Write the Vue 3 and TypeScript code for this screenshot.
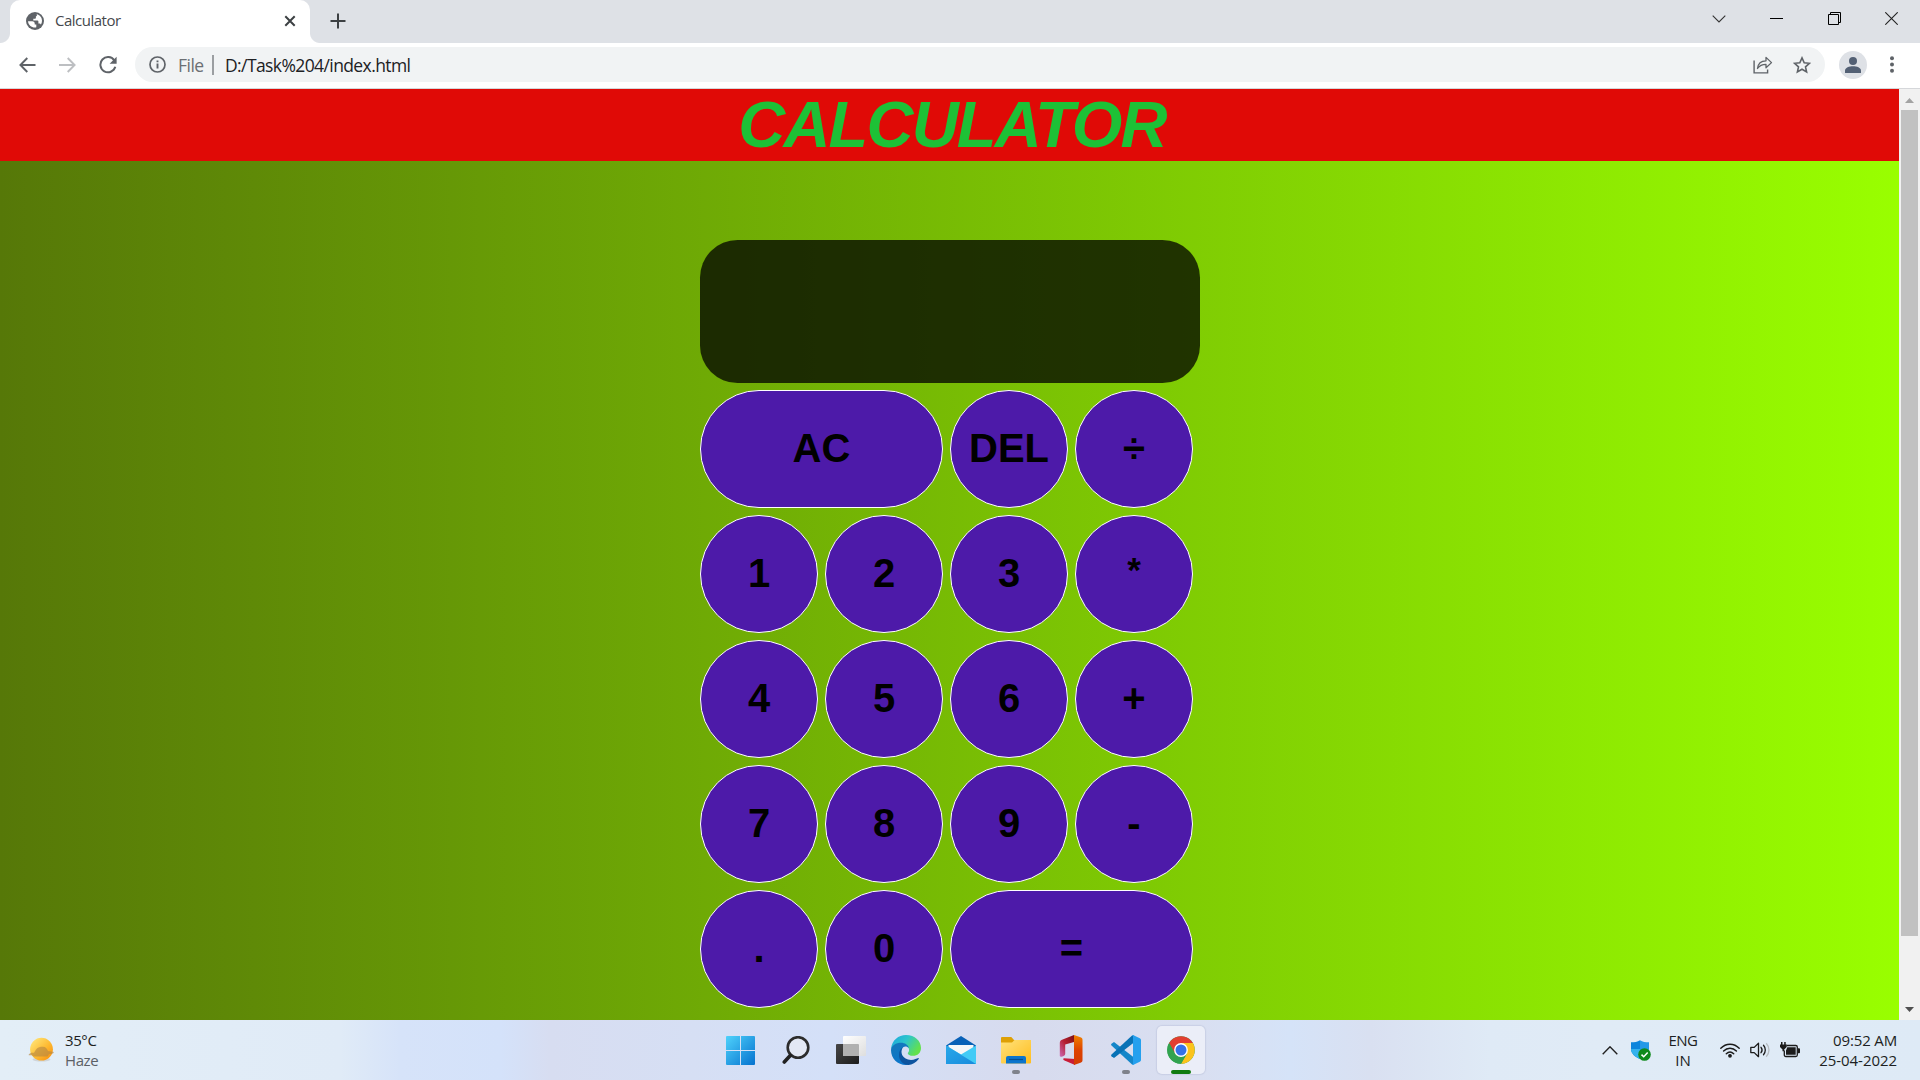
<script setup lang="ts">
interface Key {
  label: string
  wide?: boolean
}

const keys: Key[] = [
  { label: 'AC', wide: true },
  { label: 'DEL' },
  { label: '÷' },
  { label: '1' },
  { label: '2' },
  { label: '3' },
  { label: '*' },
  { label: '4' },
  { label: '5' },
  { label: '6' },
  { label: '+' },
  { label: '7' },
  { label: '8' },
  { label: '9' },
  { label: '-' },
  { label: '.' },
  { label: '0' },
  { label: '=', wide: true },
]
</script>

<template>
  <div class="screen">
    <header class="tabstrip">
      <div class="tab">
        <svg class="globe" width="18" height="18" viewBox="0 0 18 18">
          <circle cx="9" cy="9" r="9" fill="#5f6368" />
          <path d="M2 9.3h4.2c1.7 0 2.5.9 2.5 2.3v.9h1.6v2.8c-.4.2-.9.3-1.3.3C5.300 15.600 2.200 12.900 2 9.300zM10.700 2.200c3.400.7 5.300 3.500 5.300 6.600 0 1.500-.4 2.800-1.100 3.900-.3-.8-.9-1.100-1.700-1.100h-.8V9.400c0-.6-.4-.9-.9-.9H7.300V6.700H9c.6 0 .9-.4.9-.9V4.300h.3c.5 0 .7-.3.7-.8z" fill="#fff" />
        </svg>
        <span class="tab-title">Calculator</span>
        <svg class="tab-x" width="12" height="12" viewBox="0 0 12 12"><path d="M1.300 1.300l9.400 9.400M10.700 1.300l-9.400 9.400" stroke="#3c4043" stroke-width="2" fill="none" /></svg>
      </div>
      <svg class="plus" width="16" height="16" viewBox="0 0 16 16"><path d="M8 .5v15M.5 8h15" stroke="#3c4043" stroke-width="2" /></svg>
      <div class="window-controls">
        <svg width="14" height="8" viewBox="0 0 14 8"><path d="M.7.7L7 7 13.300.7" stroke="#333" stroke-width="1.100" fill="none" /></svg>
        <svg width="13" height="1" viewBox="0 0 13 1"><path d="M0 .5h13" stroke="#000" /></svg>
        <svg width="13" height="13" viewBox="0 0 13 13"><path d="M.5 2.500h10v10H.5zM2.500 2.500v-2h10v10h-2" stroke="#000" fill="none" /></svg>
        <svg width="13" height="13" viewBox="0 0 13 13"><path d="M.3.3l12.400 12.400M12.700.3L.3 12.700" stroke="#222" stroke-width="1.100" /></svg>
      </div>
    </header>

    <div class="toolbar">
      <svg width="17" height="16" viewBox="0 0 17 16"><path d="M16.500 8H1.500M8.300 1L1.400 8l6.900 7" stroke="#5f6368" stroke-width="1.900" fill="none" /></svg>
      <svg class="forward" width="17" height="16" viewBox="0 0 17 16"><path d="M0 8h15.300M8.700 1l6.900 7-6.900 7" stroke="#bdbfc2" stroke-width="1.900" fill="none" /></svg>
      <svg class="reload" width="18" height="18" viewBox="0 0 18 18">
        <path d="M15.300 4.400A7.600 7.600 0 1 0 16.300 10.800" stroke="#5f6368" stroke-width="2" fill="none" />
        <path d="M17.600.8v7h-7z" fill="#5f6368" />
      </svg>
      <div class="omnibox">
        <svg width="17" height="17" viewBox="0 0 17 17"><circle cx="8.500" cy="8.500" r="7.500" stroke="#5f6368" stroke-width="1.700" fill="none" /><path d="M8.500 7.500v5M8.500 4.400v1.900" stroke="#5f6368" stroke-width="1.900" /></svg>
        <span class="scheme">File</span>
        <span class="divider"></span>
        <span class="url">D:/Task%204/index.html</span>
        <svg class="share" width="20" height="18" viewBox="0 0 20 18"><path d="M1.100 4.500v12.400h13.500v-3.300" stroke="#5f6368" stroke-width="1.400" fill="none" /><path d="M4.500 12.500C5 7.800 8.200 4.800 13 4.800V1.400l5.500 5.200-5.500 5.200V8.400C9.300 8.400 6.400 9.700 4.500 12.500z" stroke="#5f6368" stroke-width="1.300" fill="none" stroke-linejoin="round" /></svg>
        <svg class="star" width="18" height="18" viewBox="0 0 18 18"><path d="M9 1.900l2.200 4.900 5.200.5-3.900 3.500 1.100 5.200L9 13.300 4.400 16l1.100-5.200-3.900-3.500 5.200-.5z" stroke="#5f6368" stroke-width="1.600" fill="none" /></svg>
      </div>
      <svg class="avatar" width="28" height="28" viewBox="0 0 28 28"><circle cx="14" cy="14" r="14" fill="#dee1e6" /><circle cx="14" cy="10" r="4" fill="#536074" /><path d="M6 22v-2.600c0-2.700 4.200-4.200 8-4.200s8 1.500 8 4.200V22z" fill="#536074" /></svg>
      <svg class="menu" width="4" height="17" viewBox="0 0 4 17" fill="#5f6368"><circle cx="2" cy="2.200" r="2" /><circle cx="2" cy="8.500" r="2" /><circle cx="2" cy="14.800" r="2" /></svg>
    </div>

    <div class="viewport">
      <main class="page">
        <h1 class="title">CALCULATOR</h1>
        <div class="calculator">
          <div class="display"></div>
          <div class="keys">
            <button v-for="key in keys" :key="key.label" class="key" :class="{ wide: key.wide, star: key.label === '*' }">{{ key.label }}</button>
          </div>
        </div>
      </main>
      <div class="scrollbar">
        <svg width="9" height="5" viewBox="0 0 9 5"><path d="M0 5L4.500 0 9 5z" fill="#a3a3a3" /></svg>
        <div class="thumb"></div>
        <svg class="down" width="9" height="5" viewBox="0 0 9 5"><path d="M0 0h9L4.500 5z" fill="#505050" /></svg>
      </div>
    </div>

    <footer class="taskbar">
      <div class="weather">
        <svg width="27" height="26" viewBox="0 0 27 26">
          <defs>
            <linearGradient id="sun" x1="0" y1="0" x2="1" y2="1"><stop offset=".1" stop-color="#ffe373" /><stop offset=".55" stop-color="#fdba32" /><stop offset="1" stop-color="#f98a08" /></linearGradient>
          </defs>
          <ellipse cx="13.500" cy="22.500" rx="9" ry="2" fill="#c2c4c6" opacity=".6" />
          <circle cx="13.500" cy="12.200" r="11.400" fill="url(#sun)" />
          <path d="M3 15.700h3l2-3.200c2-2.200 4-2.700 7-2.700 2.500 0 4 1.800 5 4.200l6 1-1 1.500-4 .7-1.500 2.300H5.500L4 18.200H.8v-1z" fill="#b98842" opacity=".65" />
        </svg>
        <div class="lines"><span class="deg">35°C</span><span class="haze">Haze</span></div>
      </div>

      <nav class="apps">
        <div class="app start">
          <svg width="29" height="29" viewBox="0 0 29 29">
            <defs><linearGradient id="win" gradientUnits="userSpaceOnUse" x1="0" y1="0" x2="29" y2="29"><stop stop-color="#4fd2fb" /><stop offset="1" stop-color="#0572cf" /></linearGradient></defs>
            <path d="M1 0h13v14H0V1a1 1 0 0 1 1-1zM15 0h13a1 1 0 0 1 1 1v13H15zM0 15h14v14H1a1 1 0 0 1-1-1zM15 15h14v13a1 1 0 0 1-1 1H15z" fill="url(#win)" />
          </svg>
        </div>
        <div class="app">
          <svg width="28" height="28" viewBox="0 0 28 28"><circle cx="16" cy="11.500" r="10.300" fill="#e3e8f4" stroke="#2c2c2c" stroke-width="2.600" /><path d="M8.500 19.300L2.300 26" stroke="#222" stroke-width="3.600" stroke-linecap="round" /></svg>
        </div>
        <div class="app">
          <svg width="30" height="29" viewBox="0 0 30 29">
            <defs>
              <linearGradient id="dark" x1="0" y1="0" x2="1" y2="1"><stop stop-color="#464646" /><stop offset="1" stop-color="#1c1c1c" /></linearGradient>
              <linearGradient id="light" x1="0" y1="0" x2="1" y2="1"><stop stop-color="#fff" /><stop offset="1" stop-color="#dedede" /></linearGradient>
            </defs>
            <rect x="0" y="8" width="23" height="20" rx="1" fill="url(#dark)" />
            <rect x="7" y="0" width="23" height="20" rx="1" fill="url(#light)" />
            <path d="M7 8h15a1 1 0 0 1 1 1v11H7z" fill="#b0b0b0" />
          </svg>
        </div>
        <div class="app">
          <svg width="30" height="30" viewBox="0 0 30 30">
            <defs>
              <linearGradient id="edge-top" x1="0" y1="0" x2="1" y2=".5"><stop stop-color="#1aa4df" /><stop offset=".5" stop-color="#2cc5cc" /><stop offset="1" stop-color="#63e14d" /></linearGradient>
              <linearGradient id="edge-left" x1="0" y1="0" x2=".6" y2="1"><stop stop-color="#1578b7" /><stop offset="1" stop-color="#0b76ce" /></linearGradient>
            </defs>
            <path d="M0 14C1 5 7.500 0 15 0c9 0 15 6 15 13 0 5-3.500 7.800-8 7.800-3.200 0-5.200-1.300-5.200-2.400 0-.8 1.300-1.400 1.300-3.400 0-2.800-2.800-5-6.600-5C6 9.500 1.500 12 0 14z" fill="url(#edge-top)" />
            <path d="M0 15C.3 10.500 5 7.800 10 7.800c4 0 7 2.200 7.900 5.200-1-1-2.400-1.600-3.700-1.500-2.500.3-4 2.500-4 5.500 0 6 4.300 11.500 9.800 11.600C18.600 29.500 16.500 30 15 30 6.500 30 0 23.500 0 15z" fill="url(#edge-left)" />
            <path d="M12 12.300c-4 4.500-.5 12.700 8 12.700 3.500 0 5.700-1.500 7.300-1.900.7 0 .6.700.2 1.200C25 27.500 21 29.800 17.500 29.900c-5.500 0-9.500-4.500-9.500-10 0-3.600 1.500-6.200 4-7.600z" fill="#0d549f" />
          </svg>
        </div>
        <div class="app">
          <svg width="30" height="28" viewBox="0 0 30 28">
            <defs><linearGradient id="mail" x1="0" y1="0" x2="1" y2="1"><stop stop-color="#28a8ea" /><stop offset="1" stop-color="#188bdc" /></linearGradient></defs>
            <path d="M0 9.500L15 0l15 9.500v4H0z" fill="#0861b7" />
            <path d="M2.500 9h25v8L15 20 2.500 17z" fill="#f5f7f8" />
            <path d="M0 9.500L15 18.500 30 9.500V28H0z" fill="#42cbf6" />
            <path d="M0 9.500L30 28H0z" fill="url(#mail)" />
          </svg>
        </div>
        <div class="app">
          <svg width="30" height="28" viewBox="0 0 30 28">
            <defs><linearGradient id="folder" x1="0" y1="0" x2="1" y2="1"><stop stop-color="#ffe27c" /><stop offset="1" stop-color="#ffbd1e" /></linearGradient></defs>
            <path d="M1 1h9.300L13 4h16a1 1 0 0 1 1 1v9H0V2a1 1 0 0 1 1-1z" fill="#dea006" />
            <path d="M0 6.500h11L13.500 4H30v22.500a1 1 0 0 1-1 1H1a1 1 0 0 1-1-1z" fill="url(#folder)" />
            <path d="M5 27.500V22a2 2 0 0 1 2-2h16a2 2 0 0 1 2 2v5.500z" fill="#0c75cc" />
            <path d="M8 23.500h14" stroke="#054f91" stroke-width="1.200" />
          </svg>
          <i class="running"></i>
        </div>
        <div class="app office">
          <svg width="24" height="30" viewBox="0 0 24 30">
            <defs>
              <linearGradient id="office-l" x1="1" y1="0" x2="0" y2="1"><stop stop-color="#7c1014" /><stop offset=".5" stop-color="#b62033" /><stop offset="1" stop-color="#cc6bb5" /></linearGradient>
              <linearGradient id="office-r" x1="0" y1="0" x2="0" y2="1"><stop stop-color="#f08400" /><stop offset=".5" stop-color="#de4300" /><stop offset="1" stop-color="#d33c04" /></linearGradient>
            </defs>
            <path d="M15 0L3 4.800C1.500 5.500.8 6.500.8 8v13c.2 1 1.700 1.200 4.200-.3 1-.6 1.200-1.200 1.200-2.300V9.500L15 7z" fill="url(#office-l)" />
            <path d="M5 23.200L16 24v6L5.500 25.500c-1.700-.8-1.500-2-.5-2.300z" fill="#c91c37" />
            <path d="M15 0l6.500 2.200C23 2.700 23.500 3.500 23.500 5v20c0 1.500-.5 2.300-2 2.800L15 30z" fill="url(#office-r)" />
          </svg>
        </div>
        <div class="app">
          <svg width="30" height="30" viewBox="0 0 30 30">
            <path d="M22 21.800L3 7 .5 8.800c-.6.5-.6 1.200 0 1.800L20.500 29l2 .9z" fill="#1486c9" />
            <path d="M22 8.200L3 23 .5 21.200c-.6-.5-.6-1.200 0-1.800L20.500 1l2-.9z" fill="#0872b6" />
            <path d="M22 0l6.800 3.200c.8.4 1.200 1 1.200 1.800v20c0 .8-.4 1.400-1.200 1.800L22 30c-.8 0-1.300-.3-1.700-.8.9.7 1.700.2 1.700-1V1.800c0-1.200-.8-1.700-1.700-1C20.700.3 21.200 0 22 0z" fill="#25a0ee" />
          </svg>
          <i class="running"></i>
        </div>
        <div class="app active">
          <svg width="28" height="28" viewBox="0 0 28 28">
            <circle cx="14" cy="14" r="13.800" fill="#31a350" />
            <path d="M14 14L2.050 7.100A13.800 13.800 0 0 1 25.950 7.100z" fill="#e23e31" />
            <path d="M14 7.100h11.950A13.800 13.800 0 0 1 14 27.800l6-10.300z" fill="#fbc31c" />
            <path d="M2.050 7.100L8 17.500l6-10.400z" fill="#e23e31" />
            <path d="M2.050 7.100L8 17.500A7 7 0 0 0 20 17.500L14 27.800A13.800 13.800 0 0 1 2.050 7.100z" fill="#31a350" />
            <circle cx="14" cy="14" r="6.900" fill="#fff" /><circle cx="14" cy="14" r="5.500" fill="#3472e8" />
          </svg>
          <i class="running"></i>
        </div>
      </nav>

      <div class="tray">
        <svg width="16" height="9" viewBox="0 0 16 9"><path d="M.7 8.300L8 .8l7.300 7.500" stroke="#222" stroke-width="1.400" fill="none" /></svg>
        <svg class="shield" width="20" height="21" viewBox="0 0 20 21">
          <path d="M9 .3C6.500 2 3.500 2.300 0 2.300V9c0 4.500 4 8 9 10z" fill="#0d85dc" /><path d="M9 .3c2.500 1.700 5.500 2 9 2V9c0 4.500-4 8-9 10z" fill="#2499e8" /><path d="M0 9h9v10C4.500 17 .3 14 0 9z" fill="#35b2ed" />
          <circle cx="13.500" cy="14.500" r="6.300" fill="#0f8a1b" /><path d="M10.500 14.600l2.200 2.200 4-4.200" stroke="#fff" stroke-width="1.500" fill="none" />
        </svg>
        <div class="lines lang"><span class="eng">ENG</span><span>IN</span></div>
        <svg class="wifi" width="20" height="15" viewBox="0 0 20 15" fill="none" stroke="#1b1b1b" stroke-width="1.400" stroke-linecap="round"><path d="M.8 5.300c5.100-5.500 13.300-5.500 18.400 0M3.600 8.100c3.600-3.800 9.200-3.800 12.800 0M6.300 10.800c2.200-2.200 5.200-2.200 7.400 0" /><circle cx="10" cy="12.800" r="1.200" fill="#1b1b1b" /></svg>
        <svg class="speaker" width="20" height="16" viewBox="0 0 20 16" fill="none" stroke="#1b1b1b" stroke-width="1.300" stroke-linejoin="round"><path d="M.8 5.400h3.400L8.500 1.300v13.400l-4.300-4.100H.8z" /><path d="M11 5.300c1.300 1.600 1.300 3.800 0 5.400M13.500 3.300c2.400 2.700 2.400 6.700 0 9.400" stroke-linecap="round" /><path d="M16.200 1.200c3.700 4 3.700 9.600 0 13.600" stroke="#b7bcc1" /></svg>
        <svg class="battery" width="20" height="16" viewBox="0 0 20 16"><path d="M6.500 3.500h9.300c.9 0 1.500.6 1.500 1.500v8c0 .9-.6 1.500-1.500 1.500h-10c-.9 0-1.500-.6-1.500-1.500V8.500" fill="none" stroke="#1b1b1b" stroke-width="1.300" /><path d="M7.300 5.300h8.400v7.500H6V8.500zM18 6.300h.8c.7 0 1.200.4 1.200 1v3c0 .6-.5 1-1.200 1H18zM0 2.500h1V0h1.500v2.500h1.700V0h1.500v2.500h1V5L4.200 7.500v1.800H2.500V7.500L0 5z" fill="#1b1b1b" /></svg>
        <div class="lines clock"><span class="time">09:52 AM</span><span class="date">25-04-2022</span></div>
      </div>
    </footer>
  </div>
</template>

<style>
body {
  overflow: hidden;
}
</style>

<style scoped>
* {
  box-sizing: border-box;
}

svg {
  display: block;
  flex-shrink: 0;
}

.screen {
  display: flex;
  flex-direction: column;
  width: 1920px;
  height: 1080px;
  overflow: hidden;
  font-family: "Open Sans", "Noto Sans", sans-serif;
  font-size: 15px;
}

.tabstrip {
  display: flex;
  align-items: center;
  height: 43px;
  padding-left: 10px;
  background: #dee1e6;
}

.tab {
  position: relative;
  display: flex;
  align-items: center;
  width: 300px;
  height: 43px;
  padding: 0 14px 1px 16px;
  border-radius: 10px 10px 0 0;
  background: #fff;
}

.tab::before,
.tab::after {
  content: "";
  position: absolute;
  bottom: 0;
  width: 10px;
  height: 10px;
}

.tab::before {
  left: -10px;
  background: radial-gradient(circle at 0 0, transparent 9.500px, #fff 10.500px);
}

.tab::after {
  right: -10px;
  background: radial-gradient(circle at 100% 0, transparent 9.500px, #fff 10.500px);
}

.tab-title {
  margin-left: 11px;
  padding-bottom: 2px;
  color: #45484c;
  letter-spacing: -0.500px;
}

.tab-x {
  margin-left: auto;
}

.plus {
  margin: 0 0 1px 20px;
}

.window-controls {
  display: flex;
  align-items: center;
  justify-content: space-between;
  width: 186px;
  height: 37px;
  margin: 0 22px 6px auto;
}

.toolbar {
  display: flex;
  align-items: center;
  height: 46px;
  padding: 0 26px 2px 19px;
  border-bottom: 1px solid #d5d7da;
  background: #fff;
}

.forward {
  margin-left: 23px;
}

.reload {
  margin-left: 23px;
}

.omnibox {
  display: flex;
  align-items: center;
  width: 1690px;
  height: 35px;
  margin-left: 18px;
  padding: 0 14px;
  border-radius: 18px;
  background: #f1f3f4;
  font-size: 17.500px;
}

.scheme {
  width: 26px;
  margin-left: 12px;
  color: #6b6f73;
  letter-spacing: -0.500px;
}

.divider {
  width: 2px;
  height: 20px;
  margin-left: 8px;
  background: #9b9ea1;
}

.url {
  margin-left: 11px;
  color: #202124;
  letter-spacing: -0.600px;
  white-space: nowrap;
}

.share {
  margin-left: auto;
}

.omnibox .star {
  margin-left: 20px;
}

.avatar {
  margin-left: 14px;
}

.menu {
  margin-left: auto;
}

.viewport {
  display: flex;
  height: 931px;
}

.page {
  width: 1899px;
  background: linear-gradient(to right, #567808, #99ff00);
}

.title {
  height: 72px;
  margin: 0;
  padding-left: 5px;
  background: #e00a06;
  color: #1dc136;
  font: italic bold 65px/72px "Liberation Sans", Arial, sans-serif;
  letter-spacing: -1.800px;
  text-align: center;
}

.calculator {
  width: 500px;
  margin: 79px auto 0 700px;
}

.display {
  height: 143px;
  border-radius: 37.500px;
  background: rgba(0, 0, 0, 0.75);
}

.keys {
  display: grid;
  grid-template-columns: repeat(4, 118px);
  grid-auto-rows: 118px;
  gap: 7px;
  margin-top: 7px;
}

.key {
  padding: 0 0 2px;
  border: 1px solid #fff;
  border-radius: 60px;
  background: #4d1aa9;
  color: #000;
  font: bold 40px "Liberation Sans", Arial, sans-serif;
}

.key.star {
  padding-bottom: 8px;
  font-size: 35px;
}

.wide {
  grid-column: span 2;
}

.scrollbar {
  display: flex;
  flex-direction: column;
  align-items: center;
  width: 21px;
  padding: 9px 0 8px;
  background: #f1f1f1;
}

.thumb {
  width: 17px;
  height: 826px;
  margin-top: 7px;
  background: #c1c1c1;
}

.down {
  margin-top: auto;
}

.taskbar {
  display: flex;
  align-items: center;
  height: 60px;
  background: linear-gradient(to right, #e3eef7 0, #e0ebf7 340px, #d6e3f9 400px, #d4e2fa 500px, #d7ddf1 550px, #d6dff4 690px, #d4e0f8 830px, #d7dbee 1030px, #d9dff1 1200px, #d5e3f8 1290px, #d9e0f1 1370px, #dfeaf6 1490px, #e0ebf6 1600px, #deeaf6 1920px);
}

.weather {
  display: flex;
  align-items: center;
  width: 717px;
  padding-left: 28px;
}

.lines {
  display: flex;
  flex-direction: column;
  color: #1d1f22;
  line-height: 20px;
  white-space: nowrap;
}

.weather .lines {
  margin-left: 10px;
}

.deg {
  letter-spacing: -0.400px;
}

.haze {
  color: #5b6066;
  letter-spacing: -0.400px;
}

.apps {
  display: flex;
  gap: 7px;
}

.app {
  position: relative;
  display: flex;
  align-items: center;
  justify-content: center;
  width: 48px;
  height: 48px;
}

.start,
.office {
  padding-right: 1px;
}

.active {
  border-radius: 5px;
  background: #ebeef8;
  box-shadow: 0 0 1px 1px rgba(120, 130, 170, 0.16);
}

.running {
  position: absolute;
  bottom: 0;
  left: 20px;
  width: 8px;
  height: 4px;
  border-radius: 2px;
  background: #7f828b;
}

.active .running {
  left: 14px;
  width: 20px;
  background: #0f7b10;
}

.tray {
  display: flex;
  align-items: center;
  margin-left: auto;
  padding-right: 23px;
}

.shield {
  margin-left: 13px;
}

.lang {
  align-items: center;
  width: 30px;
  margin-left: 17px;
}

.eng {
  letter-spacing: -0.500px;
}

.wifi {
  margin-left: 22px;
}

.speaker {
  margin-left: 10px;
}

.battery {
  margin-left: 10px;
}

.clock {
  align-items: flex-end;
  width: 97px;
  padding-bottom: 1px;
}

.time {
  letter-spacing: -0.150px;
}

.date {
  letter-spacing: -0.050px;
}
</style>
